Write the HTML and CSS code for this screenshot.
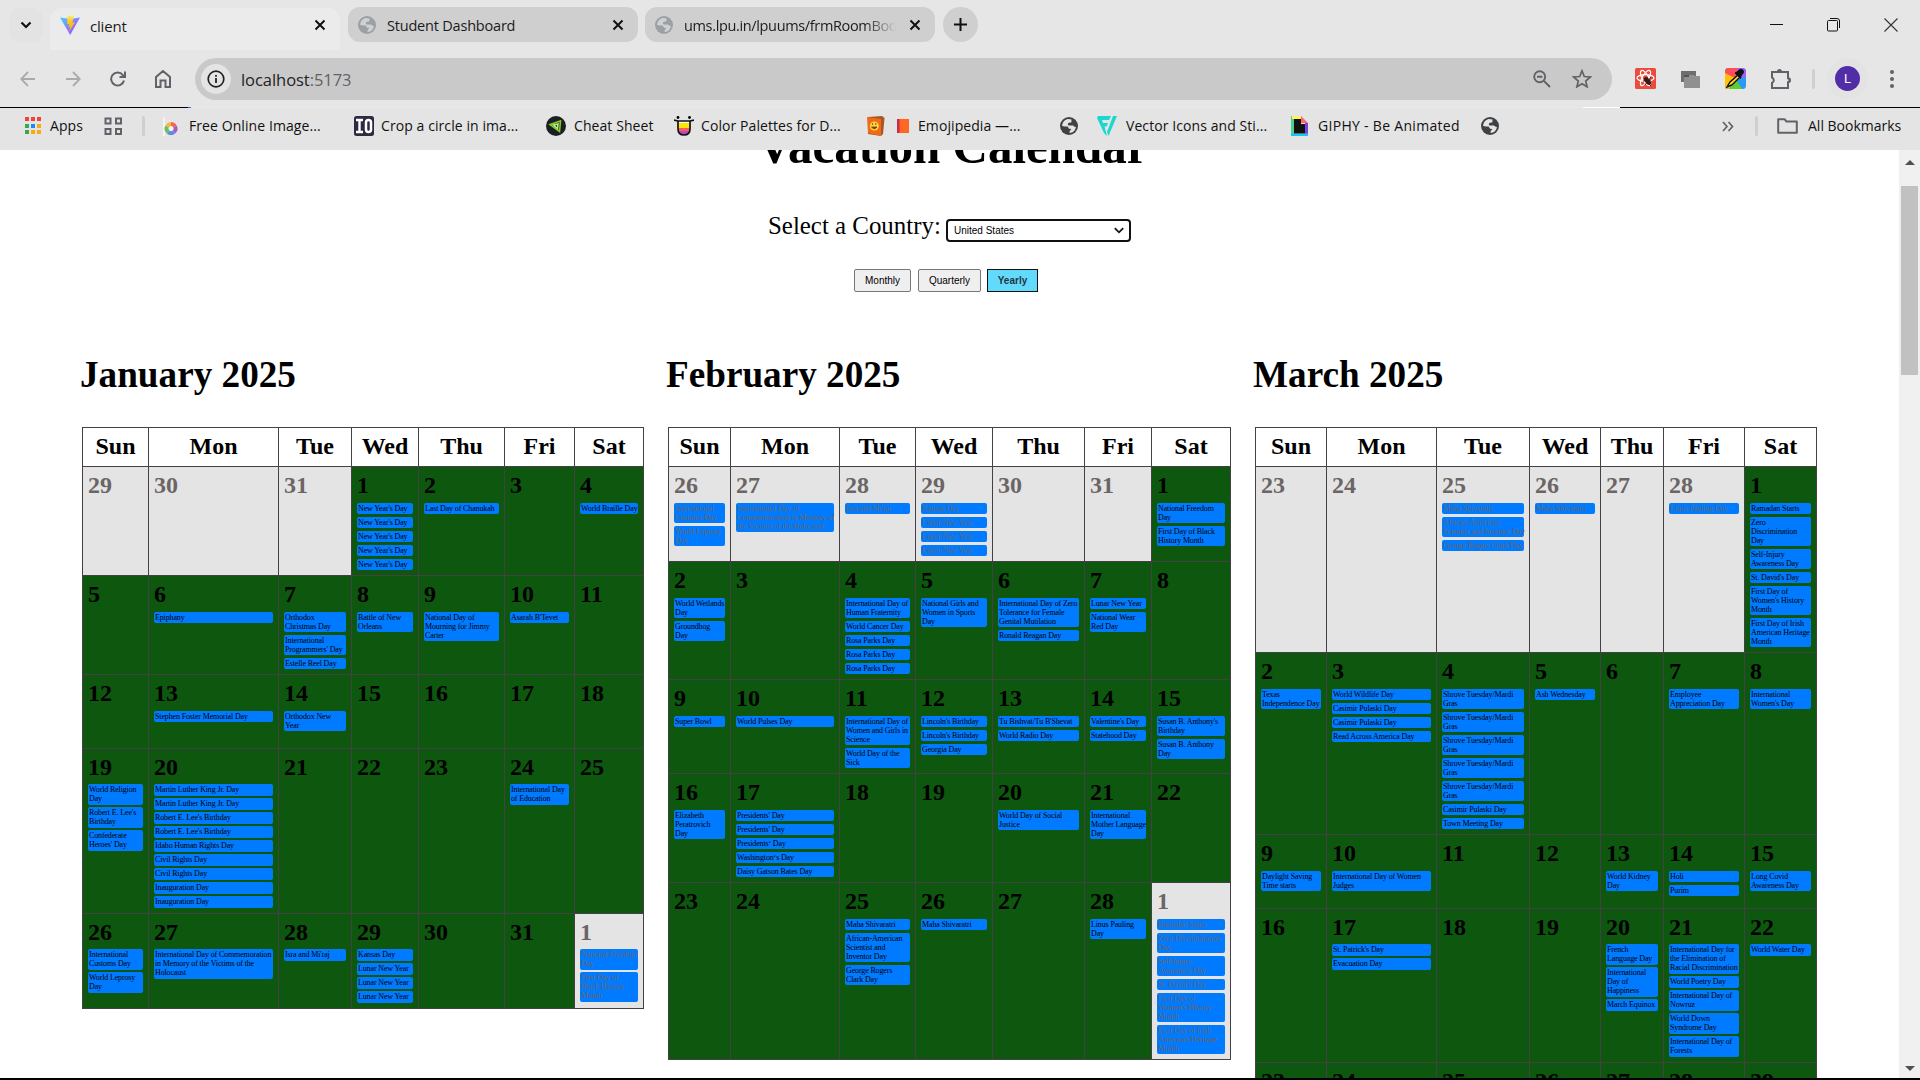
FILE: index.html
```html
<!DOCTYPE html>
<html lang="en">
<head>
<meta charset="utf-8">
<title>client</title>
<link rel="stylesheet" href="styles.css">
</head>
<body>
<svg class="defs" width="0" height="0">
  <symbol id="globe" viewBox="0 0 18 18"><circle cx="9" cy="9" r="9"/><path class="land" d="M7 2.2C4 3 2.2 5.600 2.100 9c2 .6 4 .4 5.400.6.9.3.6 1.600 1.600 2.100l2.200.2c-.3 1.200-1.500 1.400-1.700 2.500v1.500c3.500-.2 5.900-2.700 6.300-6-1.600 0-2-.9-3-1.400-1.500-.3-2.900.2-4.400 0-1-.7-.7-2.200.3-2.700 1-.3 2 .1 2.600-.5.300-.8-.2-1.600.200-2.700C10 2.200 8.500 1.900 7 2.200z"/></symbol>
  <symbol id="close" viewBox="0 0 12 12"><path d="M1.500 1.500l9 9M10.500 1.500l-9 9" fill="none" stroke="#111" stroke-width="2"/></symbol>
</svg>

<header class="browser">
  <div class="tabs">
    <button class="tab-search"><svg width="12" height="8" viewBox="0 0 12 8"><path d="M1.500 1.500L6 6l4.500-4.500" fill="none" stroke="#111" stroke-width="2.200"/></svg></button>
    <div class="tab active">
      <svg width="20" height="20" viewBox="0 0 20 20"><defs><linearGradient id="v1" x1="0" y1="0" x2="1" y2="1"><stop stop-color="#41d1ff"/><stop offset="1" stop-color="#bd34fe"/></linearGradient><linearGradient id="v2" x1="0" y1="0" x2="0" y2="1"><stop stop-color="#ffea83"/><stop offset=".4" stop-color="#ffc91a"/><stop offset="1" stop-color="#ffa800"/></linearGradient></defs><path d="M0 2.500L10 4l10-1.500L10.200 20z" fill="url(#v1)"/><path d="M14 0L7.500 1.300 7 9.300l2.200-.5-.6 3.300 1.600-.5-1.100 4.900L15 7.200l-2.600.5z" fill="url(#v2)"/></svg>
      <span>client</span><svg class="x" width="12" height="12"><use href="#close"/></svg>
    </div>
    <div class="tab">
      <svg class="globe-light" width="18" height="18"><use href="#globe"/></svg>
      <span>Student Dashboard</span><svg class="x" width="12" height="12"><use href="#close"/></svg>
    </div>
    <div class="tab">
      <svg class="globe-light" width="18" height="18"><use href="#globe"/></svg>
      <span class="fade">ums.lpu.in/lpuums/frmRoomBoo</span><svg class="x" width="12" height="12"><use href="#close"/></svg>
    </div>
    <button class="new-tab"><svg width="13" height="13" viewBox="0 0 13 13"><path d="M6.500 0v13M0 6.500h13" stroke="#111" stroke-width="2"/></svg></button>
    <div class="window-buttons">
      <svg width="14" height="14" viewBox="0 0 14 14"><path d="M0 6.500h13" stroke="#111"/></svg>
      <svg width="14" height="14" viewBox="0 0 14 14" fill="none" stroke="#111"><rect x=".5" y="2.500" width="10" height="10.500" rx="1"/><path d="M3 .500h7a2.500 2.500 0 0 1 2.500 2.500v7"/></svg>
      <svg width="14" height="14" viewBox="0 0 14 14"><path d="M.5.500l13 13M13.500.500l-13 13" stroke="#333" stroke-width="1.100"/></svg>
    </div>
  </div>

  <div class="toolbar">
    <div class="nav">
      <svg class="dim" width="16" height="16" viewBox="0 0 16 16"><path d="M15 8H1.500M8 1L1.200 8 8 15"/></svg>
      <svg class="dim" width="16" height="16" viewBox="0 0 16 16"><path d="M1 8h13.500M8 1l6.800 7L8 15"/></svg>
      <svg width="16" height="16" viewBox="0 0 16 16"><path d="M14 9.500A6.500 6.500 0 1 1 12.800 4L14.500 6M15 .500V6H9.500"/></svg>
      <svg width="16" height="18" viewBox="0 0 16 18"><path d="M1 7l7-6 7 6v10h-4.500v-6.500h-5V17H1z"/></svg>
    </div>
    <div class="omnibox">
      <div class="info"><svg width="18" height="18" viewBox="0 0 18 18"><circle cx="9" cy="9" r="7.800" fill="none" stroke="#222" stroke-width="1.700"/><path d="M9 8v5M9 5v1.800" stroke="#222" stroke-width="1.800"/></svg></div>
      <span class="url">localhost<i>:5173</i></span>
      <svg class="lens" width="18" height="18" viewBox="0 0 18 18" fill="none" stroke="#5f6368" stroke-width="1.900"><circle cx="6.700" cy="6.700" r="5.500"/><path d="M11 11l6 6M4 6.700h5.400"/></svg>
      <svg class="star" width="20" height="19" viewBox="0 0 20 19"><path d="M10 1.800l2.300 5.700 6 .5-4.600 4 1.400 5.800-5.100-3.100-5.100 3.100L6.300 12 1.700 8l6-.5z" fill="none" stroke="#5f6368" stroke-width="1.700"/></svg>
    </div>
    <div class="extensions">
      <svg width="21" height="21" viewBox="0 0 21 21"><rect width="21" height="21" rx="1.500" fill="#ea4b3c"/><g fill="none" stroke="#fff" stroke-width="1.200"><ellipse cx="10.500" cy="10" rx="8.500" ry="3.300"/><ellipse cx="10.500" cy="10" rx="8.500" ry="3.300" transform="rotate(60 10.500 10)"/><ellipse cx="10.500" cy="10" rx="8.500" ry="3.300" transform="rotate(120 10.500 10)"/></g><ellipse cx="12.500" cy="13" rx="2.500" ry="4.500" fill="#3a1a16" transform="rotate(-40 12.500 13)"/><path d="M8 13l8-1M10 17l6-8M9 10l7 8" stroke="#3a1a16"/></svg>
      <svg width="21" height="21" viewBox="0 0 21 21"><path d="M1 3h15v11H1z" fill="#6e6e6e"/><path d="M4 7h6v4H4z" fill="#555"/><path d="M4 9h5V7h5l1 1h5v12H4z" fill="#909090"/></svg>
      <svg width="21" height="21" viewBox="0 0 21 21"><clipPath id="rc"><rect width="21" height="21" rx="3.500"/></clipPath><g clip-path="url(#rc)"><path d="M0 0h21v21H0z" fill="#2b9af3"/><path d="M0 0h13L10 10 0 9z" fill="#ff4d5a"/><path d="M13 0h8v9l-11 1z" fill="#a95cf0"/><path d="M0 5l10 5-6 11H0z" fill="#ffc107"/><path d="M10 10l7 11H4z" fill="#5fcf2b"/></g><path d="M13 7l-8 7-3 5 5-2 8-8z" fill="#ffd21e" stroke="#111" stroke-width="1.400"/><path d="M10 5l2-1 2.500-2.500q4-1 4 3L16 8l-.5 2.500z" fill="#111" stroke="#111"/></svg>
      <svg width="22" height="22" viewBox="0 0 22 22"><path d="M2 4h16v6.300a2 2 0 0 1 0 4V20H2v-5a3 3 0 0 0 0-5.500z" fill="none" stroke="#5f6368" stroke-width="2"/><path d="M7 3.500a2.500 2.500 0 0 1 5 0M18.500 10a2.300 2.300 0 0 1 0 4.500" fill="#5f6368"/></svg>
      <span class="sep"></span>
      <span class="avatar">L</span>
      <svg width="6" height="20" viewBox="0 0 6 20" fill="#5f6368"><circle cx="3" cy="3" r="2"/><circle cx="3" cy="10" r="2"/><circle cx="3" cy="17" r="2"/></svg>
    </div>
  </div>
  <div class="edge"><span></span><span></span><span></span></div>

  <div class="bookmarks">
    <div class="bm apps"><svg width="18" height="18" viewBox="0 0 18 18"><path d="M1 0h4v4H1zM7 0h4v4H7zM13 0h4v4h-4z" fill="#f44336"/><path d="M1 7h4v4H1zM1 13h4v4H1z" fill="#34a853"/><path d="M7 7h4v4H7z" fill="#1e88f5"/><path d="M13 7h4v4h-4zM7 13h4v4H7zM13 13h4v4h-4z" fill="#fbab0c"/></svg><span>Apps</span></div>
    <div class="bm groups"><svg width="19" height="19" viewBox="0 0 19 19" fill="none" stroke="#5f6368" stroke-width="2"><path d="M1.500 1.500h5v5h-5zM12 1.500h5v5h-5zM1.500 12h5v5h-5zM12 12h5v5h-5z"/></svg></div>
    <div class="bm free"><span class="sep"></span><svg width="15" height="20" viewBox="0 0 15 20"><path d="M0 0l2 3v17H0z" fill="#f4f4f4"/><circle cx="8" cy="12.500" r="7" fill="#f4f4f4"/><g fill="none" stroke-width="4"><path d="M8 8a4.500 4.500 0 0 1 4 2.500" stroke="#ef6a50"/><path d="M12 10.500a4.500 4.500 0 0 1-1 5.500" stroke="#a65cc0"/><path d="M11 16a4.500 4.500 0 0 1-6 0" stroke="#5a8fe0"/><path d="M5 16a4.500 4.500 0 0 1-.8-5.500" stroke="#6abf60"/><path d="M4.200 10.500A4.500 4.500 0 0 1 8 8" stroke="#f3b93f"/></g></svg><span>Free Online Image...</span></div>
    <div class="bm crop"><svg width="20" height="20" viewBox="0 0 20 20"><rect width="20" height="20" rx="2.500" fill="#2d2a42"/><path d="M2 4h7M2 16h7M5.500 4v12" stroke="#fff" stroke-width="2.400"/><rect x="12" y="4" width="5" height="12" rx="2.500" fill="none" stroke="#fff" stroke-width="2.500"/></svg><span>Crop a circle in ima...</span></div>
    <div class="bm cheat"><svg width="20" height="20" viewBox="0 0 20 20"><circle cx="10" cy="10" r="10" fill="#1c1f22"/><g fill="none" stroke-width="1.600"><path d="M4 8.500L14.500 5l-1 10.500z" stroke="#86c928"/><path d="M7.500 9l4.500-1-.5 4.500z" stroke="#b6ec8a"/></g></svg><span>Cheat Sheet</span></div>
    <div class="bm color"><svg width="20" height="20" viewBox="0 0 20 20"><path d="M4 5h12v4H4z" fill="#fff"/><path d="M5 7h10v5H5z" fill="#ffe600"/><path d="M5 12h10v3H5z" fill="#ff5b5b"/><path d="M5 15h10q-1 4-5 4t-5-4z" fill="#b04bc0"/><path d="M0 4l4 1h12l4-1M4 5v8q0 6 6 6t6-6V5" fill="none" stroke="#111" stroke-width="1.700"/><circle cx="4" cy="1.500" r="1.400"/><circle cx="15.500" cy="1.500" r="1.400"/></svg><span>Color Palettes for D...</span></div>
    <div class="bm emoji"><svg width="19" height="20" viewBox="0 0 19 20"><path d="M2 1l14-1 2.500 2-1.500 16-2 2L2 18z" fill="#a8552a"/><path d="M1 1l14 2v17L2 17z" fill="#ee6c18"/><circle cx="8.300" cy="10" r="4.500" fill="#ffd43b"/><path d="M5.500 11q3 3.500 5.500 0zM6.500 7v2M9.800 7v2" fill="#7a3b0a" stroke="#7a3b0a" stroke-width=".8"/></svg><svg class="book" width="12" height="16" viewBox="0 0 12 16"><path d="M0 1h12v14H0z" fill="#ff6723"/><path d="M0 1h2.500v14H0z" fill="#ca2a4c"/></svg><span>Emojipedia —...</span></div>
    <div class="bm g1"><svg class="globe-dark" width="18" height="18"><use href="#globe"/></svg></div>
    <div class="bm vector"><svg width="20" height="20" viewBox="0 0 20 20" fill="#1bd8cf"><path d="M1 0h13l-2 4H5l1 3h5l-1.500 3.500H7.500L10 20 7 17 0 2z"/><path d="M16 0h4l-8.500 20L10 16z"/></svg><span>Vector Icons and Sti...</span></div>
    <div class="bm giphy"><svg width="17" height="20" viewBox="0 0 17 20"><path d="M0 0h3v20H0z" fill="#4fd08a"/><path d="M1 0h9v3H1z" fill="#fff35c"/><path d="M10 0l7 7h-7z" fill="#ff6666"/><path d="M14 7h3v11h-3z" fill="#7a3fe0"/><path d="M0 17.500h17V20H0z" fill="#19c5f5"/><path d="M3 3h7v5h4v9.500H3z" fill="#111"/></svg><span>GIPHY - Be Animated</span></div>
    <div class="bm g2"><svg class="globe-dark" width="18" height="18"><use href="#globe"/></svg></div>
    <div class="bm more"><svg width="12" height="11" viewBox="0 0 12 11"><path d="M1 1l4 4.500L1 10M6.500 1l4 4.500-4 4.500" fill="none" stroke="#5f6368" stroke-width="1.700"/></svg></div>
    <div class="bm all"><span class="sep"></span><svg width="21" height="16" viewBox="0 0 21 16"><path d="M1.200 1.200h6.300l2 2.300h10.300v11.300H1.200z" fill="none" stroke="#5f6368" stroke-width="2" stroke-linejoin="round"/></svg><span>All Bookmarks</span></div>
  </div>
</header>

<div class="viewport">
  <main class="page">
    <h1>Vacation Calendar</h1>
    <div class="country"><span>Select a Country:</span>
      <div class="select"><span>United States</span><svg width="10" height="7" viewBox="0 0 10 7"><path d="M.8 1.200L5 5.300l4.200-4.100" fill="none" stroke="#111" stroke-width="1.800"/></svg></div>
    </div>
    <div class="views"><button class="monthly">Monthly</button><button class="quarterly">Quarterly</button><button class="yearly">Yearly</button></div>
    <div class="months" id="months"></div>
  </main>
  <div class="scrollbar"><i class="up"></i><div class="thumb"></div><i class="down"></i></div>
</div>
<script src="app.js"></script>
</body>
</html>
```
FILE: styles.css
```css
* { box-sizing: border-box; }
body { margin: 0; width: 1920px; height: 1080px; overflow: hidden; background: #fff; border-bottom: 2px solid #000; font-family: "Liberation Serif", serif; color: #000; }
svg { display: block; flex: none; }
.defs { position: absolute; }
button { padding: 0; border: 0; }

/* Browser frame */
.browser { height: 150px; background: #e4e4e4; font-family: "Open Sans", "Noto Sans", sans-serif; color: #1b1b1b; }
.tabs { height: 50px; display: flex; align-items: flex-start; padding: 7px 0 0 9px; background: #e6e6e6; }
.tab-search { width: 34px; height: 34px; margin: 1px 7px 0 0; border-radius: 11px; background: #e3e3e3; display: grid; place-items: center; }
.tab { width: 290px; height: 35px; margin-right: 7px; border-radius: 12px; background: #cfcfcf; display: flex; align-items: center; padding: 0 14px 0 10px; font-size: 14.5px; letter-spacing: -.2px; white-space: nowrap; }
.tab.active { margin: 1px 8px 0 0; height: 42px; border-radius: 12px 12px 0 0; background: #ebebeb; padding-bottom: 8px; font-size: 15px; }
.tab span { margin-left: 11px; padding-top: 1px; overflow: hidden; width: 212px; }
.tab.active span { margin-left: 10px; }
.tab .x { margin-left: auto; }
.tab .fade { letter-spacing: -.35px; -webkit-mask-image: linear-gradient(90deg, #000 180px, transparent 212px); mask-image: linear-gradient(90deg, #000 180px, transparent 212px); }
.new-tab { width: 35px; height: 35px; border-radius: 50%; background: #cfcfcf; display: grid; place-items: center; margin-left: 1px; }
.window-buttons { margin: 11px 22px 0 auto; display: flex; gap: 43px; }
.globe-light { fill: #9aa0a6; --land: #d0d0d0; }
.globe-dark { fill: #3f4245; --land: #e4e4e4; }
.land { fill: var(--land); }

.toolbar { height: 57px; display: flex; align-items: center; background: #e6e6e6; }
.nav { width: 195px; padding-left: 20px; display: flex; align-items: center; gap: 29px; }
.nav path { fill: none; stroke: #5f6368; stroke-width: 2; }
.nav .dim path { stroke: #ababab; stroke-width: 1.8; }
.omnibox { width: 1417px; height: 42px; border-radius: 21px; background: #c9c9c9; display: flex; align-items: center; padding: 0 20px 0 6px; }
.info { width: 30px; height: 30px; border-radius: 50%; background: #e4e4e4; display: grid; place-items: center; }
.url { margin-left: 10px; padding-top: 1px; font-size: 16.5px; letter-spacing: -.05px; color: #222; }
.url i { font-style: normal; color: #5f6368; }
.lens { margin-left: auto; }
.star { margin-left: 21px; }
.extensions { flex: 1; display: flex; align-items: center; gap: 24px; padding-left: 23px; }
.sep { width: 3px; height: 20px; border-radius: 2px; background: #cfcfcf; flex: none; }
.extensions .sep { margin-left: -4px; }
.extensions svg:last-child { margin-left: 5px; }
.avatar { width: 25px; height: 25px; margin-left: -4px; border-radius: 50%; background: #512da8; color: #fff; font: 13px/25px Roboto, sans-serif; text-align: center; box-shadow: 0 0 0 8px #e3e3e3; }
.edge { height: 1px; display: flex; background: #e9e9e9; }
.edge span:nth-child(1) { width: 191px; background: linear-gradient(90deg, #000 188px, #3a6fd8 188px); }
.edge span:nth-child(2) { width: 37px; margin-left: 1392px; background: #fff; }
.edge span:nth-child(3) { flex: 1; background: #000; }

.bookmarks { height: 36px; display: flex; align-items: center; padding-left: 24px; font-size: 14px; letter-spacing: .08px; white-space: nowrap; color: #111; }
.bm { display: flex; align-items: center; flex: none; height: 20px; }
.bm span:last-child { margin-left: 7px; line-height: 20px; }
.apps { width: 80px; } .apps span:last-child { margin-left: 8px; }
.groups { width: 38px; }
.free { width: 212px; } .free svg { margin-left: 18px; } .free span:last-child { margin-left: 11px; }
.crop { width: 192px; }
.cheat { width: 128px; } .cheat span:last-child { margin-left: 8px; }
.color { width: 192px; }
.emoji { width: 194px; } .emoji .book { margin-left: 12px; } .emoji span:last-child { margin-left: 9px; }
.g1 { width: 37px; }
.vector { width: 194px; } .vector span:last-child { margin-left: 9px; }
.giphy { width: 190px; letter-spacing: .3px; } .giphy span:last-child { margin-left: 10px; }
.g2 { width: 241px; }
.more { width: 33px; }
.all { letter-spacing: 0; } .all svg { margin-left: 19px; } .all span:last-child { margin-left: 10px; }

/* Page */
.viewport { height: 928px; display: flex; overflow: hidden; }
.page { flex: 1; height: 928px; overflow: hidden; }
h1 { margin: -30px 0 0 757px; font-size: 49px; line-height: 54px; white-space: nowrap; }
.country { margin: 38px 0 0 768px; height: 30px; display: flex; align-items: flex-start; font-size: 24.9px; line-height: 28px; white-space: nowrap; }
.country > span { width: 178px; }
.select { width: 185px; height: 23px; margin-top: 7px; border: 2px solid #101010; border-radius: 4px; display: flex; align-items: center; justify-content: space-between; padding: 0 5px 0 6px; font: 10px/19px "Liberation Sans", sans-serif; }
.views { display: flex; margin: 27px 0 0 854px; }
.views button { height: 23px; border: 1px solid #767676; border-radius: 2px; background: #efefef; font: 10px "Liberation Sans", sans-serif; color: #000; }
.monthly { width: 57px; margin-right: 7px; }
.quarterly { width: 63px; margin-right: 6px; }
.views .yearly { width: 51px; border-color: #111; border-radius: 0; background: #61dafb; font-weight: bold; color: #213547; }
.months { display: grid; grid-template-columns: 586px 587px 586px; align-items: start; margin: 62px 0 0 80px; }
h2 { margin: 0 0 31px; font-size: 37.2px; line-height: 42px; }
table { margin-left: 2px; border-collapse: separate; border-spacing: 0; table-layout: fixed; border: solid #444046; border-width: 1px 0 0 1px; }
th, td { border: solid #444046; border-width: 0 1px 1px 0; padding: 5px; }
th { height: 39px; padding: 4px 0 6px; font-size: 24px; line-height: 28px; }
td { height: 74px; vertical-align: top; background: #0e570e; }
td.outside { background: #e4e4e4; color: #6b6565; }
.day { font-size: 24px; line-height: 26px; padding-bottom: 2px; font-weight: bold; }
.event { margin-top: 3px; padding: 1px; border-radius: 2px; background: #007bff; font-size: 8px; line-height: 9px; letter-spacing: -.14px; white-space: pre; }
.tall .event { margin-top: 2px; padding-bottom: 2px; }

.scrollbar { width: 21px; background: #f0f0f0; padding: 10px 2px 7px; display: flex; flex-direction: column; align-items: center; }
.up, .down { border: solid transparent; border-width: 0 5px 5px; border-bottom-color: #505050; }
.down { border-width: 5px 5px 0; border-top-color: #505050; margin-top: auto; }
.thumb { width: 17px; height: 189px; margin-top: 21px; background: #c1c1c1; }
```
FILE: app.js
```js
// Each month: name, column widths, rows with taller event boxes, and the days in order.
// A leading "-" marks a day outside the month; "|" splits events and "~" splits lines.
const NY = "New Year's Day", LNY = "Lunar New Year", MLK = "Martin Luther King Jr. Day";
const LEE = "Robert E. Lee's Birthday", ROSA = "Rosa Parks Day", GRAS = "Shrove Tuesday/Mardi~Gras";
const months = [
  { name: "January 2025", widths: [66, 130, 73, 67, 86, 70, 69], tall: [3, 4], days: [
    "-29", "-30", "-31", `1|${NY}|${NY}|${NY}|${NY}|${NY}`, "2|Last Day of Chanukah", "3", "4|World Braille Day",
    "5", "6|Epiphany", "7|Orthodox~Christmas Day|International~Programmers' Day|Estelle Reel Day", "8|Battle of New~Orleans", "9|National Day of~Mourning for Jimmy~Carter", "10|Asarah B'Tevet", "11",
    "12", "13|Stephen Foster Memorial Day", "14|Orthodox New~Year", "15", "16", "17", "18",
    "19|World Religion~Day|Robert E. Lee's~Birthday|Confederate~Heroes' Day", `20|${MLK}|${MLK}|${LEE}|${LEE}|Idaho Human Rights Day|Civil Rights Day|Civil Rights Day|Inauguration Day|Inauguration Day`, "21", "22", "23", "24|International Day~of Education", "25",
    "26|International~Customs Day|World Leprosy~Day", "27|International Day of Commemoration~in Memory of the Victims of the~Holocaust", "28|Isra and Mi'raj", `29|Kansas Day|${LNY}|${LNY}|${LNY}`, "30", "31", "-1|National Freedom~Day|First Day of~Black History~Month"
  ] },
  { name: "February 2025", widths: [62, 109, 76, 77, 92, 67, 79], tall: [], days: [
    "-26|International~Customs Day|World Leprosy~Day", "-27|International Day of~Commemoration in Memory of~the Victims of the Holocaust", "-28|Isra and Mi'raj", `-29|Kansas Day|${LNY}|${LNY}|${LNY}`, "-30", "-31", "1|National Freedom~Day|First Day of Black~History Month",
    "2|World Wetlands~Day|Groundhog~Day", "3", `4|International Day of~Human Fraternity|World Cancer Day|${ROSA}|${ROSA}|${ROSA}`, "5|National Girls and~Women in Sports~Day", "6|International Day of Zero~Tolerance for Female~Genital Mutilation|Ronald Reagan Day", `7|${LNY}|National Wear~Red Day`, "8",
    "9|Super Bowl", "10|World Pulses Day", "11|International Day of~Women and Girls in~Science|World Day of the~Sick", "12|Lincoln's Birthday|Lincoln's Birthday|Georgia Day", "13|Tu Bishvat/Tu B'Shevat|World Radio Day", "14|Valentine's Day|Statehood Day", "15|Susan B. Anthony's~Birthday|Susan B. Anthony~Day",
    "16|Elizabeth~Peratrovich~Day", "17|Presidents' Day|Presidents' Day|Presidents‘ Day|Washington‘s Day|Daisy Gatson Bates Day", "18", "19", "20|World Day of Social~Justice", "21|International~Mother Language~Day", "22",
    "23", "24", "25|Maha Shivaratri|African-American~Scientist and~Inventor Day|George Rogers~Clark Day", "26|Maha Shivaratri", "27", "28|Linus Pauling~Day", "-1|Ramadan Starts|Zero Discrimination~Day|Self-Injury~Awareness Day|St. David's Day|First Day of~Women's History~Month|First Day of Irish~American Heritage~Month"
  ] },
  { name: "March 2025", widths: [71, 110, 93, 71, 63, 81, 72], tall: [3], days: [
    "-23", "-24", "-25|Maha Shivaratri|African-American~Scientist and Inventor Day|George Rogers Clark Day", "-26|Maha Shivaratri", "-27", "-28|Linus Pauling Day", "1|Ramadan Starts|Zero~Discrimination~Day|Self-Injury~Awareness Day|St. David's Day|First Day of~Women's History~Month|First Day of Irish~American Heritage~Month",
    "2|Texas~Independence Day", "3|World Wildlife Day|Casimir Pulaski Day|Casimir Pulaski Day|Read Across America Day", `4|${GRAS}|${GRAS}|${GRAS}|${GRAS}|${GRAS}|Casimir Pulaski Day|Town Meeting Day`, "5|Ash Wednesday", "6", "7|Employee~Appreciation Day", "8|International~Women's Day",
    "9|Daylight Saving~Time starts", "10|International Day of Women~Judges", "11", "12", "13|World Kidney~Day", "14|Holi|Purim", "15|Long Covid~Awareness Day",
    "16", "17|St. Patrick's Day|Evacuation Day", "18", "19", "20|French~Language Day|International~Day of~Happiness|March Equinox", "21|International Day for~the Elimination of~Racial Discrimination|World Poetry Day|International Day of~Nowruz|World Down~Syndrome Day|International Day of~Forests", "22|World Water Day",
    "23", "24", "25", "26", "27", "28", "29"
  ] }
];

const el = (tag, cls, text) => {
  const node = document.createElement(tag);
  if (cls) node.className = cls;
  if (text) node.textContent = text;
  return node;
};

for (const month of months) {
  const section = el("section");
  section.append(el("h2", "", month.name));
  const table = el("table");
  table.style.width = month.widths.reduce((a, b) => a + b, 1) + "px";
  const cols = el("colgroup");
  for (const w of month.widths) {
    const col = el("col");
    col.style.width = w + "px";
    cols.append(col);
  }
  const head = el("tr");
  for (const d of ["Sun", "Mon", "Tue", "Wed", "Thu", "Fri", "Sat"]) head.append(el("th", "", d));
  table.append(cols, head);
  for (let i = 0; i < month.days.length; i += 7) {
    const row = el("tr", month.tall.includes(i / 7) ? "tall" : "");
    for (const day of month.days.slice(i, i + 7)) {
      const [num, ...events] = day.split("|");
      const cell = el("td", num[0] === "-" ? "outside" : "");
      cell.append(el("div", "day", num.replace("-", "")));
      for (const e of events) cell.append(el("div", "event", e.replaceAll("~", "\n")));
      row.append(cell);
    }
    table.append(row);
  }
  section.append(table);
  document.getElementById("months").append(section);
}
```
